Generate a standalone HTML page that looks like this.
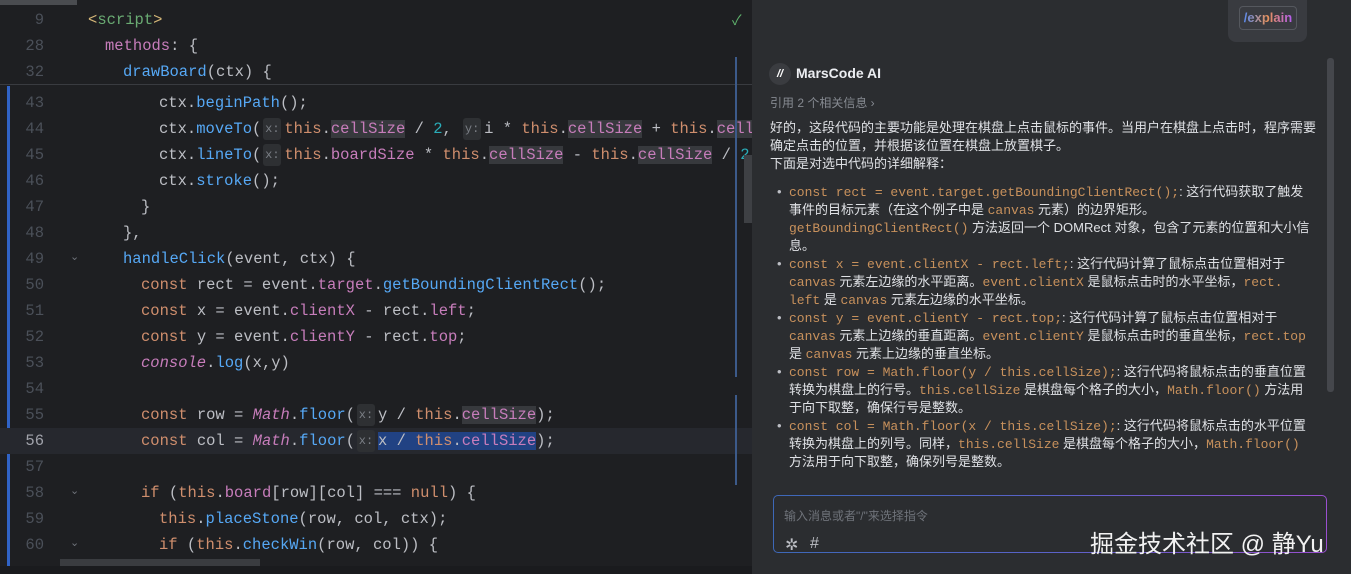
<!DOCTYPE html>
<html><head><meta charset="utf-8"><style>
*{margin:0;padding:0;box-sizing:border-box}
body{width:1351px;height:574px;overflow:hidden;background:#1e1f22;position:relative;font-family:"Liberation Sans","Noto Sans CJK SC",sans-serif}
#ed{position:absolute;left:0;top:0;width:754px;height:574px;background:#1e1f22;overflow:hidden}
.ln{position:absolute;left:0;width:44px;text-align:right;color:#4b5059;font:15.5px "Liberation Mono",monospace}
.cd{position:absolute;left:0;white-space:pre;color:#bcbec4;font:15.5px/26px "Liberation Mono",monospace}
.row{position:absolute;left:0;width:754px;height:26px}
.k{color:#cf8e6d}.f{color:#56a8f5}.p{color:#c77dbb}.n{color:#2aacb8}.t{color:#d5b778}.g{color:#6aab73}
.i{font-style:italic;color:#c77dbb}
.h{background:#37393d}
.hint{display:inline-block;width:18px;text-align:center;margin:0 3px 0 2px;background:#2e3033;color:#7a7e85;font-size:12px;line-height:22px;border-radius:3px;vertical-align:top;margin-top:2px}
.sel{background:#214283}
#pn{position:absolute;left:754px;top:0;width:597px;height:574px;background:#2b2d30;color:#dfe1e5;font-size:13px}
.c{font-family:"Liberation Mono",monospace;color:#c8915c;font-size:13px;line-height:1}
.tx{position:absolute;left:16px;width:550px;line-height:18px}
ul.tx{width:546px}
ul{list-style:none}
li{position:relative;padding-left:19px;height:auto;line-height:18px}
li:before{content:"•";position:absolute;left:7px;color:#bcbec4}
</style></head><body>
<div id="ed">
<div style="position:absolute;left:0;top:0;width:77px;height:5px;background:#4a4c50"></div>
<div style="position:absolute;left:0;top:84px;width:754px;height:1px;background:#393b40"></div>
<div style="position:absolute;left:7px;top:86px;width:3px;height:488px;background:#3574f0;opacity:.8"></div>
<div class="row" style="top:428px;background:#26282e"></div>
<div class="ln" style="top:11px">9</div><div class="cd" style="left:88px;top:7px"><span class="t">&lt;</span><span class="g">script</span><span class="t">&gt;</span></div>
<div class="ln" style="top:37px">28</div><div class="cd" style="left:105px;top:33px"><span class="p">methods</span>: {</div>
<div class="ln" style="top:63px">32</div><div class="cd" style="left:123px;top:59px"><span class="f">drawBoard</span>(ctx) {</div>
<div class="ln" style="top:94px">43</div><div class="cd" style="left:159px;top:90px">ctx.<span class="f">beginPath</span>();</div>
<div class="ln" style="top:120px">44</div><div class="cd" style="left:159px;top:116px">ctx.<span class="f">moveTo</span>(<span class="hint">x:</span><span class="k">this</span>.<span class="p h">cellSize</span> / <span class="n">2</span>, <span class="hint">y:</span>i * <span class="k">this</span>.<span class="p h">cellSize</span> + <span class="k">this</span>.<span class="p h">cellSize</span></div>
<div class="ln" style="top:146px">45</div><div class="cd" style="left:159px;top:142px">ctx.<span class="f">lineTo</span>(<span class="hint">x:</span><span class="k">this</span>.<span class="p">boardSize</span> * <span class="k">this</span>.<span class="p h">cellSize</span> - <span class="k">this</span>.<span class="p h">cellSize</span> / <span class="n">2</span>,</div>
<div class="ln" style="top:172px">46</div><div class="cd" style="left:159px;top:168px">ctx.<span class="f">stroke</span>();</div>
<div class="ln" style="top:198px">47</div><div class="cd" style="left:141px;top:194px">}</div>
<div class="ln" style="top:224px">48</div><div class="cd" style="left:123px;top:220px">},</div>
<div class="ln" style="top:250px">49</div><div class="cd" style="left:123px;top:246px"><span class="f">handleClick</span>(event, ctx) {</div>
<div class="ln" style="top:276px">50</div><div class="cd" style="left:141px;top:272px"><span class="k">const</span> rect = event.<span class="p">target</span>.<span class="f">getBoundingClientRect</span>();</div>
<div class="ln" style="top:302px">51</div><div class="cd" style="left:141px;top:298px"><span class="k">const</span> x = event.<span class="p">clientX</span> - rect.<span class="p">left</span>;</div>
<div class="ln" style="top:328px">52</div><div class="cd" style="left:141px;top:324px"><span class="k">const</span> y = event.<span class="p">clientY</span> - rect.<span class="p">top</span>;</div>
<div class="ln" style="top:354px">53</div><div class="cd" style="left:141px;top:350px"><span class="i">console</span>.<span class="f">log</span>(x,y)</div>
<div class="ln" style="top:380px">54</div>
<div class="ln" style="top:406px">55</div><div class="cd" style="left:141px;top:402px"><span class="k">const</span> row = <span class="i">Math</span>.<span class="f">floor</span>(<span class="hint">x:</span>y / <span class="k">this</span>.<span class="p h">cellSize</span>);</div>
<div class="ln" style="top:432px;color:#a1a3ab">56</div><div class="cd" style="left:141px;top:428px"><span class="k">const</span> col = <span class="i">Math</span>.<span class="f">floor</span>(<span class="hint">x:</span><span class="sel">x / <span class="k">this</span>.<span class="p">cellSize</span></span>);</div>
<div class="ln" style="top:458px">57</div>
<div class="ln" style="top:484px">58</div><div class="cd" style="left:141px;top:480px"><span class="k">if</span> (<span class="k">this</span>.<span class="p">board</span>[row][col] === <span class="k">null</span>) {</div>
<div class="ln" style="top:510px">59</div><div class="cd" style="left:159px;top:506px"><span class="k">this</span>.<span class="f">placeStone</span>(row, col, ctx);</div>
<div class="ln" style="top:536px">60</div><div class="cd" style="left:159px;top:532px"><span class="k">if</span> (<span class="k">this</span>.<span class="f">checkWin</span>(row, col)) {</div>
<div style="position:absolute;left:70px;top:250px;color:#6f737a;font-size:11px">⌄</div>
<div style="position:absolute;left:70px;top:484px;color:#6f737a;font-size:11px">⌄</div>
<div style="position:absolute;left:70px;top:536px;color:#6f737a;font-size:11px">⌄</div>
<div style="position:absolute;left:60px;top:559px;width:200px;height:8px;background:#3a3c40"></div>
<div style="position:absolute;left:0;top:566px;width:754px;height:8px;background:#1a1b1e"></div>
<div style="position:absolute;left:732px;top:10px;color:#5fb36d;font-size:14px">✓</div>
<div style="position:absolute;left:735px;top:57px;width:2px;height:320px;background:#3c5a8a"></div>
<div style="position:absolute;left:735px;top:395px;width:2px;height:90px;background:#3c5a8a"></div>
<div style="position:absolute;left:744px;top:155px;width:8px;height:68px;background:#3e4044"></div>
<div style="position:absolute;left:752px;top:0;width:2px;height:574px;background:#2b2d30"></div>
</div>
<div id="pn">
<div style="position:absolute;left:474px;top:0;width:79px;height:42px;background:#393b40;border-radius:0 0 8px 8px"></div>
<div style="position:absolute;left:485px;top:6px;width:58px;height:24px;border:1px solid #55585e;border-radius:4px;font-weight:bold;font-size:13px;line-height:22px;text-align:center"><span style="background:linear-gradient(90deg,#5b8cf0,#e8915a,#b45cf0);-webkit-background-clip:text;color:transparent">/explain</span></div>
<div style="position:absolute;left:15px;top:63px;width:22px;height:22px;border-radius:50%;background:#3a3c40;color:#fff;font-size:11px;font-weight:bold;text-align:center;line-height:22px;font-style:italic">//</div>
<div style="position:absolute;left:42px;top:65px;font-size:14px;font-weight:bold;color:#eceef2">MarsCode AI</div>
<div class="tx" style="top:94px;color:#868a91;font-size:12px">引用 2 个相关信息 ›</div>
<div class="tx" style="top:119px">好的，这段代码的主要功能是处理在棋盘上点击鼠标的事件。当用户在棋盘上点击时，程序需要确定点击的位置，并根据该位置在棋盘上放置棋子。<br>下面是对选中代码的详细解释：</div>
<ul class="tx" style="top:183px">
<li><span class="c">const rect = event.target.getBoundingClientRect();</span>: 这行代码获取了触发事件的目标元素（在这个例子中是 <span class="c">canvas</span> 元素）的边界矩形。<span class="c">getBoundingClientRect()</span> 方法返回一个 DOMRect 对象，包含了元素的位置和大小信息。</li>
<li><span class="c">const x = event.clientX - rect.left;</span>: 这行代码计算了鼠标点击位置相对于 <span class="c">canvas</span> 元素左边缘的水平距离。<span class="c">event.clientX</span> 是鼠标点击时的水平坐标，<span class="c">rect.</span><br><span class="c">left</span> 是 <span class="c">canvas</span> 元素左边缘的水平坐标。</li>
<li><span class="c">const y = event.clientY - rect.top;</span>: 这行代码计算了鼠标点击位置相对于 <span class="c">canvas</span> 元素上边缘的垂直距离。<span class="c">event.clientY</span> 是鼠标点击时的垂直坐标，<span class="c">rect.top</span> 是 <span class="c">canvas</span> 元素上边缘的垂直坐标。</li>
<li><span class="c">const row = Math.floor(y / this.cellSize);</span>: 这行代码将鼠标点击的垂直位置转换为棋盘上的行号。<span class="c">this.cellSize</span> 是棋盘每个格子的大小，<span class="c">Math.floor()</span> 方法用<br>于向下取整，确保行号是整数。</li>
<li><span class="c">const col = Math.floor(x / this.cellSize);</span>: 这行代码将鼠标点击的水平位置转换为棋盘上的列号。同样，<span class="c">this.cellSize</span> 是棋盘每个格子的大小，<span class="c">Math.floor()</span><br>方法用于向下取整，确保列号是整数。</li>
</ul>
<div style="position:absolute;left:573px;top:58px;width:7px;height:334px;background:#45474c;border-radius:3px"></div>
<div style="position:absolute;left:19px;top:495px;width:554px;height:58px;border-radius:5px;padding:1px;background:linear-gradient(90deg,#3d68b8,#5a62c8,#9a4fd0)"><div style="width:100%;height:100%;background:#2b2d30;border-radius:4px"></div></div>
<div style="position:absolute;left:30px;top:507px;color:#6f737a;font-size:12px">输入消息或者"/"来选择指令</div>
<div style="position:absolute;left:31px;top:535px;color:#bcbec4;font-size:16px">✲</div>
<div style="position:absolute;left:56px;top:535px;color:#bcbec4;font-size:16px">#</div>
<div style="position:absolute;left:336px;top:524px;color:#f2f2f2;font-size:24px;font-family:'Liberation Sans','Noto Sans CJK SC',sans-serif">掘金技术社区 @ 静Yu</div>
</div>
</body></html>
